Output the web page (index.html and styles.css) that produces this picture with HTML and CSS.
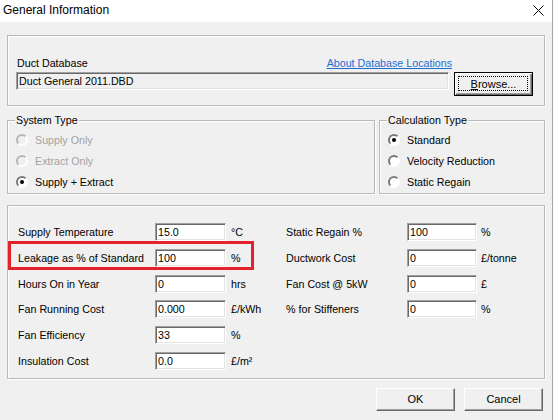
FILE: index.html
```html
<!DOCTYPE html>
<html>
<head>
  <title>General Information</title>
  <link rel="stylesheet" href="styles.css">
</head>

<body>
  <div class="dialog">
    <div class="titlebar">
      <span class="title">General Information</span>
      <svg class="close" width="11" height="11" viewBox="0 0 11 11">
        <path d="M0.5 0.5 L10.5 10.5 M10.5 0.5 L0.5 10.5" stroke="#000" stroke-width="1" fill="none"/>
      </svg>
    </div>

    <div class="content">
      <div class="group db">
        <div class="db-head">
          <span class="db-label">Duct Database</span>
          <a class="link" href="#">About Database Locations</a>
        </div>
        <div class="db-row">
          <input class="field readonly db-file" type="text" value="Duct General 2011.DBD" readonly>
          <button class="btn btn-default"><u>B</u>rowse...</button>
        </div>
      </div>

      <div class="types">
        <fieldset class="box system">
          <legend>System Type</legend>
          <label class="radio disabled"><span class="dot"></span>Supply Only</label>
          <label class="radio disabled"><span class="dot"></span>Extract Only</label>
          <label class="radio"><span class="dot checked"></span>Supply + Extract</label>
        </fieldset>
        <fieldset class="box calc">
          <legend>Calculation Type</legend>
          <label class="radio"><span class="dot checked"></span>Standard</label>
          <label class="radio"><span class="dot"></span>Velocity Reduction</label>
          <label class="radio"><span class="dot"></span>Static Regain</label>
        </fieldset>
      </div>

      <div class="group params">
        <div class="col col-left">
          <span>Supply Temperature</span><input class="field" type="text" value="15.0"><span class="unit">&deg;C</span>
          <span>Leakage as % of Standard</span><input class="field" type="text" value="100"><span class="unit">%</span>
          <span>Hours On in Year</span><input class="field" type="text" value="0"><span class="unit">hrs</span>
          <span>Fan Running Cost</span><input class="field" type="text" value="0.000"><span class="unit">&pound;/kWh</span>
          <span>Fan Efficiency</span><input class="field" type="text" value="33"><span class="unit">%</span>
          <span>Insulation Cost</span><input class="field" type="text" value="0.0"><span class="unit">&pound;/m&sup2;</span>
        </div>
        <div class="col col-right">
          <span>Static Regain %</span><input class="field" type="text" value="100"><span class="unit">%</span>
          <span>Ductwork Cost</span><input class="field" type="text" value="0"><span class="unit">&pound;/tonne</span>
          <span>Fan Cost @ 5kW</span><input class="field" type="text" value="0"><span class="unit">&pound;</span>
          <span>% for Stiffeners</span><input class="field" type="text" value="0"><span class="unit">%</span>
        </div>
        <div class="highlight"></div>
      </div>

      <div class="actions">
        <button class="btn">OK</button>
        <button class="btn">Cancel</button>
      </div>
    </div>
  </div>
</body>
</html>
```

FILE: styles.css
```css
:root {
  --face: #f0f0f0;
  --etch: #b9b9b9;
  --shadow: #696969;
  --mid: #a0a0a0;
}

body {
  margin: 0;
  background: #fff;
  font-family: "Liberation Sans", Arial, sans-serif;
  font-size: 10.7px;
  color: #000;
}

.dialog {
  width: 552px;
  height: 420px;
  border-right: 1px solid #a6a6a6;
  background: var(--face);
  display: flex;
  flex-direction: column;
}

.titlebar {
  height: 22px;
  background: #fff;
  display: flex;
  justify-content: space-between;
  align-items: flex-start;
  padding: 0 8px 0 3px;
}

.title {
  font-size: 12px;
  line-height: 16px;
  padding-top: 2px;
}

.close {
  margin-top: 5px;
}

.content {
  padding: 0 7px;
}

/* etched group boxes */
.group,
.box {
  border: 1px solid var(--etch);
  box-shadow: inset 1px 1px 0 #fff, 1px 1px 0 #fff;
}

.db {
  margin-top: 13px;
  padding: 20px 11px 9px 8px;
}

.db-head {
  display: flex;
  justify-content: space-between;
  line-height: 14px;
  margin-bottom: 2px;
}

.db-label {
  padding-left: 1px;
}

.link {
  color: #1a6fd0;
  text-decoration: underline;
  margin-right: 81px;
}

.db-row {
  display: flex;
  align-items: flex-start;
  gap: 5px;
}

.db-file {
  width: 433px;
  height: 19px;
}

/* text fields */
.field {
  box-sizing: border-box;
  height: 18px;
  margin: 0;
  padding: 0 2px;
  font: inherit;
  color: #000;
  background: #fff;
  border: 1px solid;
  border-color: var(--mid) #fff #fff var(--mid);
  box-shadow: inset 1px 1px 0 var(--shadow), inset -1px -1px 0 #e3e3e3;
  outline: none;
}

.field.readonly {
  background: var(--face);
}

/* buttons */
.btn {
  position: relative;
  box-sizing: border-box;
  width: 79px;
  height: 23px;
  margin: 0;
  padding: 0;
  font: inherit;
  font-size: 11px;
  color: #000;
  background: var(--face);
  border: 1px solid;
  border-color: #fff var(--shadow) var(--shadow) #fff;
  box-shadow: inset -1px -1px 0 var(--mid);
}

.btn-default {
  height: 24px;
  border: 1px solid #000;
  box-shadow: inset 1px 1px 0 #fff, inset -1px -1px 0 var(--shadow), inset -2px -2px 0 var(--mid);
}

.btn-default:after {
  content: "";
  position: absolute;
  top: 3px;
  left: 3px;
  right: 4px;
  bottom: 4px;
  border: 1px dotted #000;
}

/* radio groups */
.types {
  display: flex;
  gap: 4px;
  margin-top: 8px;
}

.box {
  margin: 0;
  min-width: 0;
  padding: 2px 0 1px 8px;
}

.system {
  flex: 0 0 368px;
  box-sizing: border-box;
}

.calc {
  flex: 1;
}

.box legend {
  padding: 0 1px;
  margin-left: -1px;
  line-height: 13px;
  background: var(--face);
}

.radio {
  display: flex;
  align-items: center;
  gap: 7px;
  height: 21px;
}

.radio.disabled {
  color: #a3a3a3;
}

.dot {
  position: relative;
  box-sizing: border-box;
  width: 12px;
  height: 12px;
  border-radius: 50%;
  border: 2px solid;
  border-color: #7a7a7a #fff #fff #7a7a7a;
  background: #fff;
}

.disabled .dot {
  border-color: #b6b6b6 #fff #fff #b6b6b6;
  background: var(--face);
}

.dot.checked:after {
  content: "";
  position: absolute;
  top: 2px;
  left: 2px;
  width: 4px;
  height: 4px;
  border-radius: 50%;
  background: #000;
}

/* parameters */
.params {
  position: relative;
  display: flex;
  margin-top: 11px;
  padding: 17px 0 8px 10px;
}

.col {
  display: grid;
  grid-auto-rows: 18px;
  row-gap: 7.8px;
  align-items: center;
}

.col-left {
  width: 268px;
  grid-template-columns: 137px 71px 1fr;
}

.col-right {
  flex: 1;
  grid-template-columns: 121px 70px 1fr;
}

.unit {
  padding-left: 5px;
}

.col-right .unit {
  padding-left: 4px;
}

.col .field {
  width: 100%;
}

.highlight {
  position: absolute;
  top: 35px;
  left: 0;
  width: 246px;
  height: 29px;
  box-sizing: border-box;
  border: 3px solid #e3222b;
}

.actions {
  display: flex;
  justify-content: flex-end;
  gap: 9px;
  margin-top: 9px;
  padding-right: 2px;
}
```
